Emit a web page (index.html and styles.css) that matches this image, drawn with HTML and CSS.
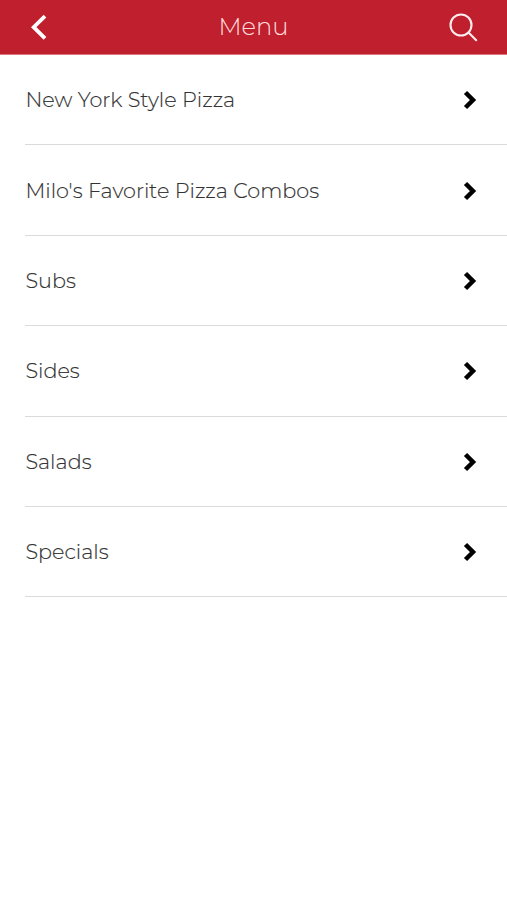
FILE: index.html
```html
<!DOCTYPE html>
<html lang="en">
<head>
<meta charset="utf-8">
<title>Menu</title>
<link rel="stylesheet" href="styles.css">
</head>
<body>
<header class="bar">
<svg class="back" viewBox="0 0 18 26"><path d="M16 2.200 4.700 13.200 16 24.300"/></svg>
<h1 class="title">Menu</h1>
<svg class="search" viewBox="0 0 30 30"><circle cx="12" cy="12" r="10.500"/><path d="m19.500 19.500 7.700 7.700"/></svg>
</header>
<ul class="list">
<li class="row"><span class="label">New York Style Pizza</span><svg class="chev" viewBox="0 0 14 20"><path d="m2.500 2.500 7.500 7.500-7.500 7.500"/></svg></li>
<li class="row"><span class="label">Milo's Favorite Pizza Combos</span><svg class="chev" viewBox="0 0 14 20"><path d="m2.500 2.500 7.500 7.500-7.500 7.500"/></svg></li>
<li class="row"><span class="label">Subs</span><svg class="chev" viewBox="0 0 14 20"><path d="m2.500 2.500 7.500 7.500-7.500 7.500"/></svg></li>
<li class="row"><span class="label">Sides</span><svg class="chev" viewBox="0 0 14 20"><path d="m2.500 2.500 7.500 7.500-7.500 7.500"/></svg></li>
<li class="row"><span class="label">Salads</span><svg class="chev" viewBox="0 0 14 20"><path d="m2.500 2.500 7.500 7.500-7.500 7.500"/></svg></li>
<li class="row"><span class="label">Specials</span><svg class="chev" viewBox="0 0 14 20"><path d="m2.500 2.500 7.500 7.500-7.500 7.500"/></svg></li>
</ul>
</body>
</html>
```
FILE: styles.css
```css
* { box-sizing: border-box; }
body { margin: 0; background: #fff; font-family: Montserrat, Inter, sans-serif; font-weight: 300; color: #333; }
.bar { height: 55px; padding-bottom: 1px; background: #c01f2e; border-bottom: 1px solid #d9797f; display: grid; grid-template-columns: 60px 1fr 60px; align-items: center; color: #fff; }
.back { width: 18px; height: 26px; margin: 1px 0 0 29px; }
.search { width: 30px; height: 30px; margin: 2px 0 0 2px; }
svg { fill: none; stroke: currentColor; }
.back path { stroke-width: 3.800; }
.search { stroke-width: 2.100; stroke-linecap: round; color: #ffeded; }
.title { margin: 0; text-align: center; font-size: 24.200px; font-weight: 300; color: #ffdcdc; }
.label { white-space: nowrap; -webkit-text-stroke: 0.150px currentColor; }
.list { list-style: none; margin: 0; padding: 0 0 0 25.400px; }
.row { height: 90.400px; border-bottom: 1px solid #dadada; display: flex; align-items: center; justify-content: space-between; padding-right: 30.500px; font-size: 20.750px; }
.chev { width: 14px; height: 20px; margin-top: 1px; color: #000; stroke-width: 4.500; }
```
